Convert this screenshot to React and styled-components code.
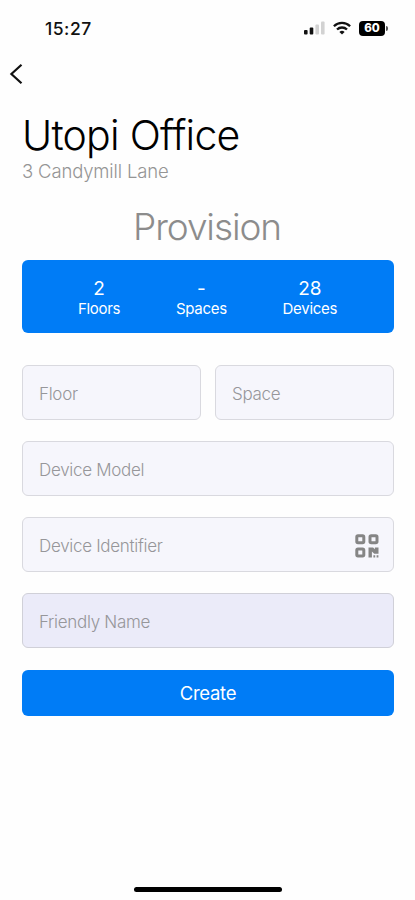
import React from 'react';
import styled, { createGlobalStyle } from 'styled-components';

const GlobalStyle = createGlobalStyle`
    * {
        box-sizing: border-box;
    }
    body {
        margin: 0;
        background: #fefefe;
        font-family: Inter, 'Liberation Sans', sans-serif;
    }
`;

const Screen = styled.div`
    display: flex;
    flex-direction: column;
    width: 415px;
    height: 900px;
    overflow: hidden;
`;

const StatusBar = styled.div`
    display: flex;
    justify-content: space-between;
    align-items: center;
    height: 56px;
    padding: 0 27px 0 45px;
`;

const Time = styled.span`
    font-size: 17.5px;
    font-weight: 500;
    letter-spacing: 0.5px;
    color: #111;
`;

const StatusIcons = styled.div`
    display: flex;
    align-items: center;
    gap: 8px;
`;

const Battery = styled.div`
    display: flex;
    align-items: center;
    gap: 1px;
    &::after {
        content: '';
        width: 2px;
        height: 5px;
        border-radius: 0 2px 2px 0;
        background: #555;
    }
`;

const BatteryLevel = styled.span`
    width: 26px;
    height: 15px;
    border-radius: 4px;
    background: #000;
    color: #fff;
    font-size: 11.5px;
    font-weight: 800;
    line-height: 15px;
    text-align: center;
`;

const BackButton = styled.button`
    display: flex;
    align-items: center;
    width: 40px;
    height: 36px;
    padding: 0 0 0 9px;
    border: none;
    background: none;
`;

const Content = styled.main`
    display: flex;
    flex-direction: column;
    padding: 22px 21px 0 22px;
`;

const Title = styled.h1`
    margin: 0;
    font-size: 41px;
    font-weight: 350;
    line-height: 42px;
    letter-spacing: -0.75px;
    color: #000;
`;

const Address = styled.p`
    margin: 4px 0 0;
    font-size: 18.5px;
    font-weight: 350;
    line-height: 22px;
    letter-spacing: -0.15px;
    color: #959595;
`;

const Heading = styled.h2`
    margin: 23px 0 0;
    padding-right: 2px;
    font-size: 37px;
    font-weight: 350;
    line-height: 44px;
    letter-spacing: -1.1px;
    text-align: center;
    color: #8c8c8c;
`;

const Stats = styled.div`
    display: flex;
    justify-content: space-around;
    height: 73px;
    margin-top: 11px;
    padding: 17px 29px 0 28px;
    border-radius: 6px;
    background: #007cf6;
    color: #fff;
`;

const Stat = styled.div`
    display: flex;
    flex-direction: column;
    align-items: center;
`;

const Count = styled.span`
    font-size: 19px;
    line-height: 23px;
`;

const StatLabel = styled.span`
    font-size: 15px;
    line-height: 18px;
    letter-spacing: -0.3px;
`;

const Form = styled.div`
    display: flex;
    flex-direction: column;
    gap: 21px;
    margin-top: 32px;
`;

const Row = styled.div`
    display: grid;
    grid-template-columns: 1fr 1fr;
    gap: 14px;
`;

const Field = styled.div`
    display: flex;
    justify-content: space-between;
    align-items: center;
    height: 55px;
    padding: 2px 14px 0 16px;
    border: 1px solid ${({ $active }) => ($active ? '#d0d0d8' : '#d9d9df')};
    border-radius: 6px;
    background: ${({ $active }) => ($active ? '#ebebf9' : '#f6f6fc')};
    font-size: 17px;
    font-weight: 350;
    letter-spacing: -0.3px;
    color: #96969a;
`;

const CreateButton = styled.button`
    height: 46px;
    margin-top: 1px;
    padding: 0;
    border: none;
    border-radius: 6px;
    background: #007cf6;
    color: #fff;
    font-family: inherit;
    font-size: 18.5px;
    letter-spacing: -0.3px;
`;

const HomeIndicator = styled.div`
    align-self: center;
    width: 148px;
    height: 5px;
    margin: auto 0 8px;
    border-radius: 3px;
    background: #000;
`;

const SignalIcon = () => (
    <svg width="21" height="14" viewBox="0 0 21 14">
        <rect x="0" y="9" width="3.6" height="4.5" rx="1" fill="#111" />
        <rect x="5.7" y="6.5" width="3.6" height="7" rx="1" fill="#111" />
        <rect x="11.4" y="3.5" width="3.6" height="10" rx="1" fill="#d2d2d2" />
        <rect x="17" y="0.5" width="3.6" height="13" rx="1" fill="#d2d2d2" />
    </svg>
);

const WifiIcon = () => (
    <svg width="18" height="14" viewBox="0 0 18 14" fill="none" stroke="#111" strokeWidth="2.3">
        <path d="M0.9 5.2a11.6 11.6 0 0 1 16.2 0" />
        <path d="M4 8.5a7.2 7.2 0 0 1 10 0" />
        <path d="M9 13.6L6.4 11a3.8 3.8 0 0 1 5.2 0z" fill="#111" stroke="none" />
    </svg>
);

const BackIcon = () => (
    <svg width="14" height="22" viewBox="0 0 14 22" fill="none" stroke="#111" strokeWidth="2.2">
        <path d="M12.5 1.7L2.4 11l10.1 9.3" />
    </svg>
);

const QrIcon = () => (
    <svg width="24" height="24" viewBox="0 0 24 24" fill="none" stroke="#858585" strokeWidth="3">
        <rect x="1.8" y="1.8" width="7" height="7" rx="1.2" />
        <rect x="15" y="1.8" width="7" height="7" rx="1.2" />
        <rect x="1.8" y="15" width="7" height="7" rx="1.2" />
        <path
            d="M13.5 13.5h4.6l1.8 1.8v-1.8h3.6v6.2h-4.2l-2.4-2.2v6h-3.4zM18.4 21.2h1.8v2.2h-1.8zM21.6 21.2h1.8v2.2h-1.8z"
            fill="#858585"
            stroke="none"
        />
    </svg>
);

const stats = [
    { label: 'Floors', count: '2' },
    { label: 'Spaces', count: '-' },
    { label: 'Devices', count: '28' },
];

const App = () => {
    return (
        <Screen>
            <GlobalStyle />
            <StatusBar>
                <Time>15:27</Time>
                <StatusIcons>
                    <SignalIcon />
                    <WifiIcon />
                    <Battery>
                        <BatteryLevel>60</BatteryLevel>
                    </Battery>
                </StatusIcons>
            </StatusBar>
            <BackButton aria-label="Back">
                <BackIcon />
            </BackButton>
            <Content>
                <Title>Utopi Office</Title>
                <Address>3 Candymill Lane</Address>
                <Heading>Provision</Heading>
                <Stats>
                    {stats.map((stat) => (
                        <Stat key={stat.label}>
                            <Count>{stat.count}</Count>
                            <StatLabel>{stat.label}</StatLabel>
                        </Stat>
                    ))}
                </Stats>
                <Form>
                    <Row>
                        <Field>Floor</Field>
                        <Field>Space</Field>
                    </Row>
                    <Field>Device Model</Field>
                    <Field>
                        Device Identifier
                        <QrIcon />
                    </Field>
                    <Field $active>Friendly Name</Field>
                    <CreateButton>Create</CreateButton>
                </Form>
            </Content>
            <HomeIndicator />
        </Screen>
    );
};

export default App;
